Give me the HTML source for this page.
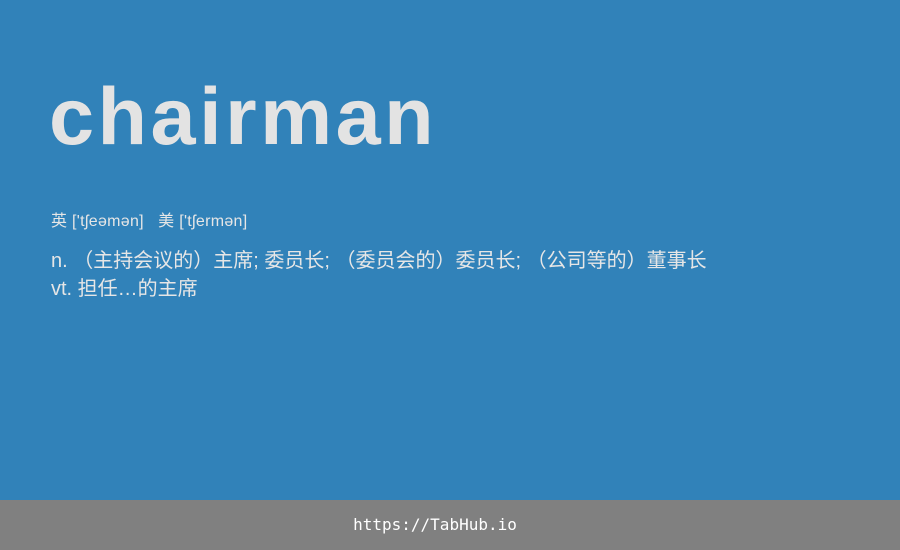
<!DOCTYPE html>
<html><head><meta charset="utf-8"><style>
body{margin:0;width:900px;height:550px;background:#3182b9;position:relative;overflow:hidden;font-family:"Liberation Sans","Noto Sans CJK SC",sans-serif;color:#e6e6e6}
.w{position:absolute;left:49px;top:72px;font-size:81px;font-weight:bold;line-height:90px;letter-spacing:3.5px;color:#e3e3e3}
.p{position:absolute;left:51px;top:212px;font-size:16px;line-height:20px;letter-spacing:0.3px}
.d{position:absolute;left:51px;top:247px;font-size:20px;line-height:28px}
.f{position:absolute;left:0;top:500px;width:870px;height:50px;background:#808080;color:#fff;font-family:"DejaVu Sans Mono",monospace;font-size:16px;line-height:50px;text-align:center;padding-right:30px}
</style></head><body>
<div class="w">chairman</div>
<div class="p">英 ['tʃeəmən] &nbsp; 美 ['tʃermən]</div>
<div class="d">n. （主持会议的）主席; 委员长; （委员会的）委员长; （公司等的）董事长<br>vt. 担任…的主席</div>
<div class="f">https://TabHub.io</div>
</body></html>
